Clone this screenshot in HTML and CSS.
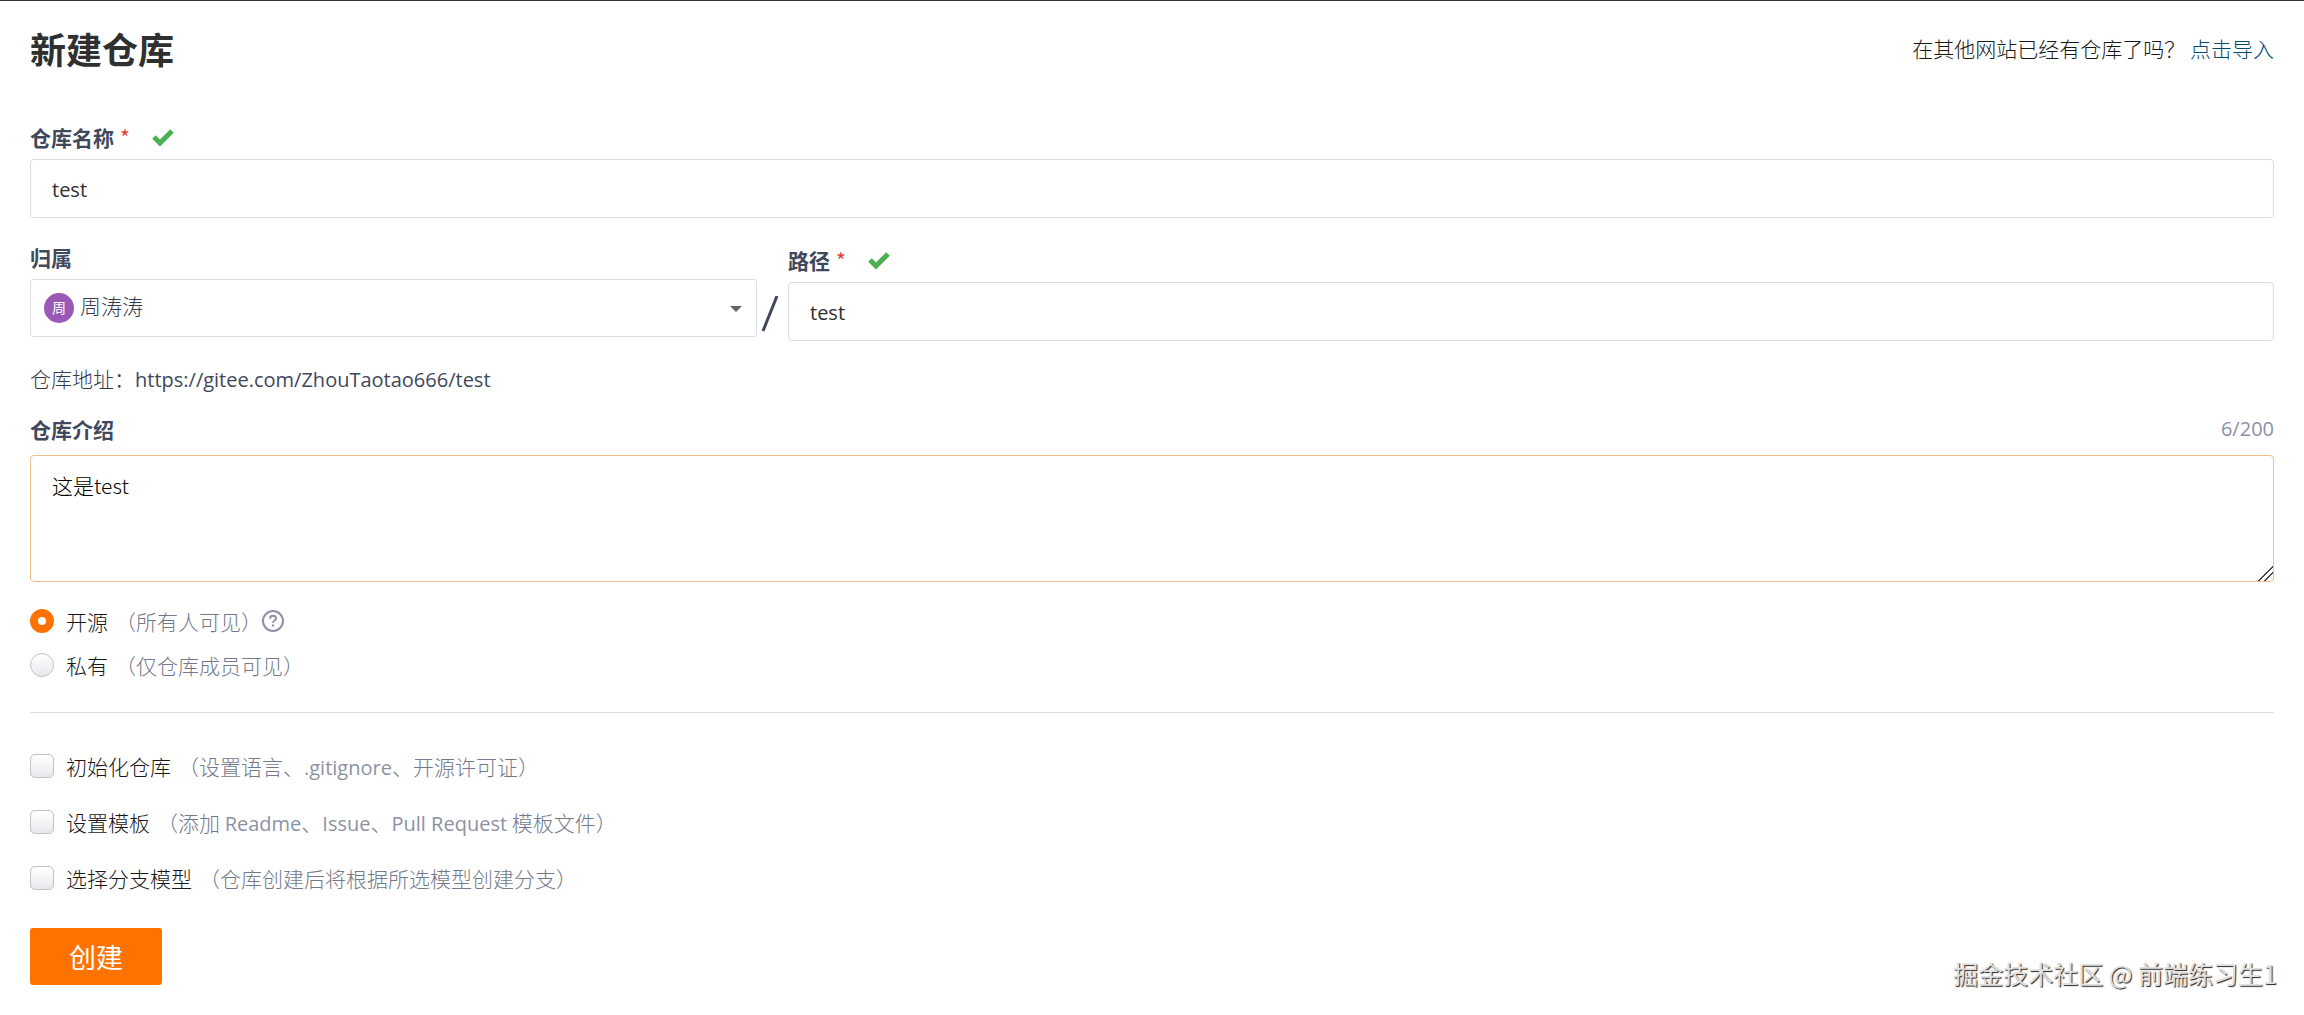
FILE: index.html
```html
<!DOCTYPE html>
<html lang="zh-CN">
<head>
    <meta charset="UTF-8">
    <meta name="viewport" content="width=device-width, initial-scale=1.0">
    <title>新建仓库</title>
    <link rel="stylesheet" href="styles.css">
</head>
<body>
    <header class="page-header">
        <h1>新建仓库</h1>
        <p class="import-tip">在其他网站已经有仓库了吗？ <a href="#">点击导入</a></p>
    </header>

    <main>
        <form action="/projects" method="POST" id="projectForm">
            <div class="field name-field">
                <div class="label-row">
                    <label for="name">仓库名称</label>
                    <span class="required">*</span>
                    <svg class="check" viewBox="0 0 22 17" aria-hidden="true"><path d="M2 8L8 14L20 2"/></svg>
                </div>
                <input class="text-input" type="text" id="name" name="name" value="test" required>
            </div>

            <div class="path-row">
                <div class="field owner-field">
                    <div class="label-row">
                        <label for="owner">归属</label>
                    </div>
                    <div class="owner-select">
                        <span class="avatar">周</span>
                        <select id="owner" name="owner">
                            <option>周涛涛</option>
                        </select>
                        <svg class="caret" viewBox="0 0 12 6" aria-hidden="true"><path d="M0 0H12L6 6Z"/></svg>
                    </div>
                </div>
                <svg class="slash" viewBox="0 0 18 36" aria-hidden="true"><path d="M16 0L2 35"/></svg>
                <div class="field path-field">
                    <div class="label-row">
                        <label for="path">路径</label>
                        <span class="required">*</span>
                        <svg class="check" viewBox="0 0 22 17" aria-hidden="true"><path d="M2 8L8 14L20 2"/></svg>
                    </div>
                    <input class="text-input" type="text" id="path" name="path" value="test" required>
                </div>
            </div>

            <p class="address">仓库地址：<span class="latin">https://gitee.com/ZhouTaotao666/test</span></p>

            <div class="field intro-field">
                <div class="label-row">
                    <label for="intro">仓库介绍</label>
                    <span class="counter latin">6/200</span>
                </div>
                <textarea id="intro" name="intro" maxlength="200">这是test</textarea>
            </div>

            <div class="visibility">
                <div class="option">
                    <input type="radio" id="public" name="visibility" checked>
                    <label for="public">开源<span class="hint">（所有人可见）</span></label>
                    <svg class="help" viewBox="0 0 22 22" aria-hidden="true">
                        <circle cx="11" cy="11" r="10"/>
                        <path d="M8 8.800C8 6.800 9.300 5.700 11 5.700S14 6.800 14 8.500C14 10.500 11 10.600 11 12.800"/>
                        <path d="M11 14.600V16.600"/>
                    </svg>
                </div>
                <div class="option">
                    <input type="radio" id="private" name="visibility">
                    <label for="private">私有<span class="hint">（仅仓库成员可见）</span></label>
                </div>
            </div>

            <div class="settings">
                <div class="option">
                    <input type="checkbox" id="init" name="init">
                    <label for="init">初始化仓库<span class="hint">（设置语言、<span class="latin">.gitignore</span>、开源许可证）</span></label>
                </div>
                <div class="option">
                    <input type="checkbox" id="template" name="template">
                    <label for="template">设置模板<span class="hint">（添加 <span class="latin">Readme</span>、<span class="latin">Issue</span>、<span class="latin">Pull Request</span> 模板文件）</span></label>
                </div>
                <div class="option">
                    <input type="checkbox" id="branch" name="branch">
                    <label for="branch">选择分支模型<span class="hint">（仓库创建后将根据所选模型创建分支）</span></label>
                </div>
            </div>

            <button type="submit" id="createBtn">创建</button>
        </form>
    </main>

    <div class="watermark">掘金技术社区 @ 前端练习生1</div>
</body>
</html>
```
FILE: styles.css
```css
/* General page styling */
* {
    box-sizing: border-box;
}

body {
    position: relative;
    margin: 0;
    padding: 0 30px 30px;
    border-top: 1px solid #333;
    background-color: #fff;
    color: #353b4b;
    font-family: "Noto Sans CJK SC", sans-serif;
    font-size: 21px;
    font-weight: 300;
    line-height: 30px;
}

input, select, textarea, button {
    margin: 0;
    font-family: inherit;
    font-size: inherit;
    font-weight: inherit;
    line-height: inherit;
}

svg {
    flex: none;
    fill: none;
}

.latin {
    font-family: "Open Sans", sans-serif;
    font-size: 20px;
    font-weight: 400;
    line-height: 20px;
}

/* Header */
.page-header {
    display: flex;
    justify-content: space-between;
    align-items: center;
    padding: 22px 0;
}

h1 {
    margin: 0;
    color: #303030;
    font-size: 36px;
    line-height: 50px;
}

.import-tip {
    margin: 0;
    color: #181818;
}

.import-tip a {
    color: #004a6e;
    text-decoration: none;
}

/* Fields */
.label-row {
    display: flex;
    align-items: center;
    height: 30px;
    margin-bottom: 7px;
}

.label-row label {
    color: #40485b;
    font-weight: bold;
}

.name-field {
    padding-top: 27px;
}

.required {
    margin-left: 6px;
    color: #e04038;
    font-weight: 400;
}

.check {
    width: 22px;
    height: 17px;
    margin-left: 22px;
    stroke: #4caf50;
    stroke-width: 5;
}

.text-input {
    display: block;
    width: 100%;
    height: 59px;
    padding: 2px 21px 0;
    border: 1px solid #dcdddf;
    border-radius: 4px;
    background-color: #fff;
    color: #303030;
    font-family: "Open Sans", "Noto Sans CJK SC", sans-serif;
    font-size: 20px;
    font-weight: 400;
}

.path-row {
    display: flex;
    padding-top: 24px;
}

.owner-field {
    width: 727px;
}

.path-field {
    flex: 1;
    padding-top: 3px;
}

.owner-select {
    position: relative;
}

.owner-select select {
    display: block;
    width: 100%;
    height: 58px;
    padding: 0 49px 6px;
    border: 1px solid #dcdfe3;
    border-radius: 3px;
    background-color: #fff;
    color: #353b4b;
    appearance: none;
}

.avatar {
    position: absolute;
    top: 14px;
    left: 14px;
    width: 30px;
    height: 30px;
    border-radius: 50%;
    background-color: #9b59b6;
    color: #fff;
    font-size: 14px;
    font-weight: 400;
    line-height: 28px;
    text-align: center;
}

.caret {
    position: absolute;
    top: 27px;
    right: 15px;
    width: 12px;
    height: 6px;
    fill: #606266;
}

.slash {
    width: 18px;
    height: 36px;
    margin: 54px 9px 0 4px;
    stroke: #40485b;
    stroke-width: 3;
}

.address {
    margin: 22px 0 21px;
}

.address .latin {
    color: #40485b;
}

.intro-field .label-row {
    justify-content: space-between;
    margin-bottom: 11px;
}

.counter {
    color: #8c92a4;
}

textarea {
    display: block;
    width: 100%;
    height: 127px;
    padding: 14px 21px;
    border: 1px solid #f0c08c;
    border-radius: 4px;
    color: #000;
    resize: vertical;
}

textarea::-webkit-resizer {
    background: linear-gradient(135deg, transparent 48%, #444 48%, #444 54%, transparent 54%, transparent 68%, #444 68%, #444 74%, transparent 74%);
}

/* Radios and checkboxes */
.option {
    display: flex;
    align-items: center;
}

.option label {
    color: #181818;
}

.option .hint {
    margin-left: 7px;
    color: #73798a;
}

.option .latin {
    color: #8c92a4;
}

.option input {
    width: 24px;
    height: 24px;
    margin-right: 12px;
    border: 1px solid #c0c2c6;
    background: linear-gradient(#fff, #e6e8ec);
    appearance: none;
}

.option input[type="radio"] {
    border-radius: 50%;
}

.option input[type="radio"]:checked {
    border: 8px solid #fe7300;
    background: #fff;
}

.option input[type="checkbox"] {
    border-radius: 5px;
}

.help {
    width: 22px;
    height: 22px;
    stroke: #8c92a4;
    stroke-width: 2;
}

.visibility {
    display: flex;
    flex-direction: column;
    gap: 14px;
    padding: 24px 0 32px;
    border-bottom: 1px solid #dcdfe3;
}

.settings {
    display: flex;
    flex-direction: column;
    gap: 26px;
    padding: 38px 0 35px;
}

#createBtn {
    display: block;
    width: 132px;
    height: 57px;
    border: none;
    border-radius: 3px;
    background-color: #fe7300;
    color: #fff;
    font-size: 27px;
    font-weight: 400;
    cursor: pointer;
}

.watermark {
    position: absolute;
    right: 27px;
    bottom: 27px;
    color: #e0e0e0;
    font-size: 25px;
    font-weight: 400;
    text-shadow: 1px 1px 1px #222;
}
```
